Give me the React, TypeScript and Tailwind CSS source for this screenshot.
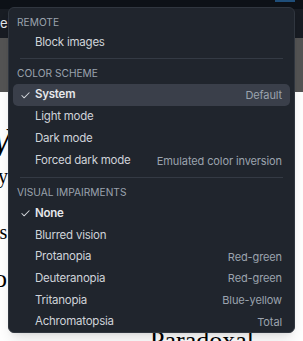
import { Check } from 'lucide-react';

type Item = { label: string; hint?: string; checked?: boolean };

const colorScheme: Item[] = [
    { label: 'System', hint: 'Default', checked: true },
    { label: 'Light mode' },
    { label: 'Dark mode' },
    { label: 'Forced dark mode', hint: 'Emulated color inversion' },
];

const impairments: Item[] = [
    { label: 'None', checked: true },
    { label: 'Blurred vision' },
    { label: 'Protanopia', hint: 'Red-green' },
    { label: 'Deuteranopia', hint: 'Red-green' },
    { label: 'Tritanopia', hint: 'Blue-yellow' },
    { label: 'Achromatopsia', hint: 'Total' },
];

export default function App() {
    return (
        <div className="relative w-[303px] h-[341px] overflow-hidden bg-white font-['Inter',sans-serif]">
            {/* page behind the menu */}
            <div className="flex flex-col h-full">
                <div className="h-[9px] bg-[#0d1117] flex justify-end pr-[8px]">
                    <div className="w-[20px] h-[2px] bg-[#1f4e79]" />
                </div>
                <div className="h-[29px] bg-[#181c23] flex items-center text-[13px] text-[#e5e7eb]">elo</div>
                <div className="h-[54px] bg-[#545454]" />
                <div className="flex-1 overflow-hidden bg-white font-['Liberation_Serif',serif] text-black">
                    <div className="italic text-[40px] leading-none mt-[30px] -ml-[22px]">W</div>
                    <div className="text-[20px] leading-none mt-[4px] -ml-[2px]">y</div>
                    <div className="text-[20px] leading-none mt-[36px] -ml-[4px]">'s</div>
                    <div className="text-[26px] leading-none mt-[24px] -ml-[6px]">o</div>
                    <div className="text-[26px] leading-none mt-[36px] ml-[150px]">Paradoxal</div>
                </div>
            </div>

            {/* dropdown menu */}
            <div className="absolute z-10 left-[8px] top-[7px] w-[287px] h-[326px] rounded-[6px] border border-[#30363f] bg-[#20252d] shadow-lg px-[4px] pt-[5px]">
                <Header>Remote</Header>
                <Row item={{ label: 'Block images' }} h="h-[20px]" />
                <Divider />
                <Header>Color scheme</Header>
                {colorScheme.map((it, i) => (
                    <Row key={i} item={it} active={i === 0} />
                ))}
                <Divider />
                <Header>Visual impairments</Header>
                {impairments.map((it, i) => (
                    <Row key={i} item={it} h="h-[21.6px]" />
                ))}
            </div>
        </div>
    );
}

const Header = ({ children }: any) => (
    <div className="h-[20px] flex items-center pl-[4px] text-[10.2px] uppercase text-[#9ba3ae]">{children}</div>
);

const Divider = () => <div className="mx-[7px] my-[5px] h-px bg-[#343a44]" />;

const Row = ({ item, active = false, h = 'h-[22px]' }: { item: Item; active?: boolean; h?: string }) => (
    <div className={`${h} flex items-center pl-[7px] pr-[8px] rounded-[5px] ${active ? 'bg-[#3a3f4a]' : ''}`}>
        <span className="w-[15px] flex items-center text-[#d4d7dc]">
            {item.checked && <Check size={11} strokeWidth={2.2} />}
        </span>
        <span className={`text-[11.5px] tracking-[-0.02em] ${item.checked ? 'font-semibold text-[#e6e8eb]' : 'text-[#cfd3d9]'}`}>{item.label}</span>
        {item.hint && <span className="ml-auto text-[11px] tracking-[-0.01em] text-[#9ba3ae]">{item.hint}</span>}
    </div>
);
